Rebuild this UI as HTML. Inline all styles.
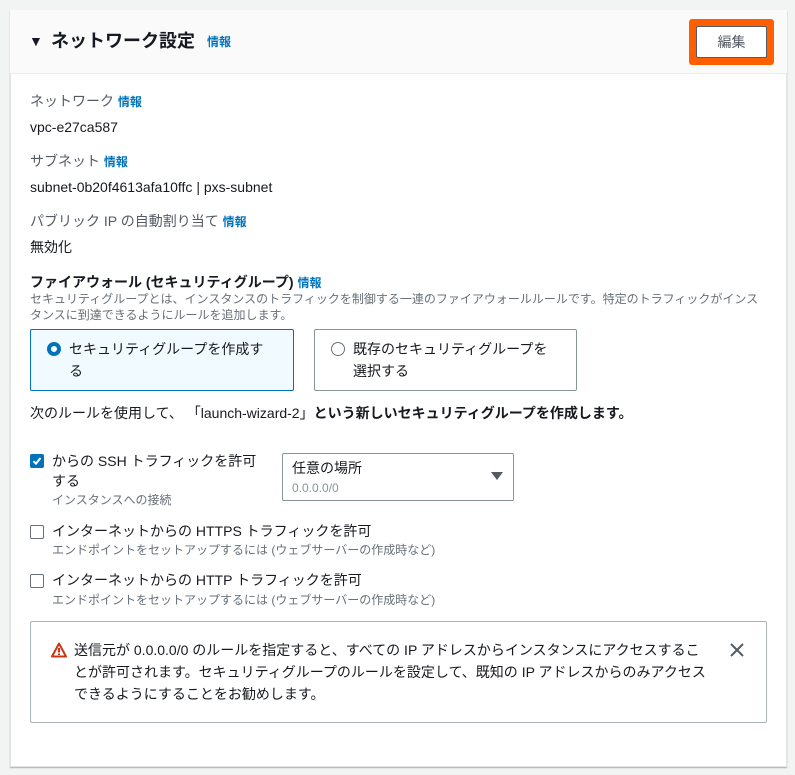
<!DOCTYPE html>
<html><head><meta charset="utf-8"><style>
*{margin:0;padding:0;box-sizing:border-box}
body{width:795px;height:775px;background:#f2f3f3;font-family:"Liberation Sans","Noto Sans CJK JP",sans-serif;color:#16191f;position:relative;overflow:hidden;font-size:14px}
.a{position:absolute;white-space:nowrap;line-height:1}
.panel{position:absolute;left:10px;top:10px;width:777px;height:757px;background:#fff;border:1px solid #e3e5e5;box-shadow:0 1px 1px rgba(0,28,36,.3)}
.hdr{position:absolute;left:10px;top:10px;width:777px;height:64px;background:#fafafa;border-bottom:1px solid #eaeded}
.info{color:#0073bb;font-weight:bold;font-size:12px}
.lbl{color:#545b64}
.sub{color:#687078;font-size:12px}
.box{position:absolute;border:1px solid #879596;border-radius:2px}
.cb{position:absolute;width:14px;height:14px;border:1px solid #687078;border-radius:2px;background:#fff}
</style></head><body>
<div class="panel"></div>
<div class="hdr"></div>
<div class="a" style="left:29px;top:34px;font-size:14px">▼</div>
<div class="a" style="left:51px;top:32px;font-size:18px;font-weight:bold">ネットワーク設定</div>
<div class="a info" style="left:207px;top:36px">情報</div>
<div style="position:absolute;left:689px;top:19px;width:85px;height:46px;background:#ff5f00;border-radius:3px"></div>
<div style="position:absolute;left:696px;top:26px;width:71px;height:32px;background:#fff;border:1px solid #545b64;border-radius:2px;text-align:center;line-height:30px;color:#545b64;font-size:14px">編集</div>

<div class="a lbl" style="left:30px;top:94px">ネットワーク <span class="info">情報</span></div>
<div class="a" style="left:30px;top:120px">vpc-e27ca587</div>
<div class="a lbl" style="left:30px;top:154px">サブネット <span class="info">情報</span></div>
<div class="a" style="left:30px;top:180px">subnet-0b20f4613afa10ffc | pxs-subnet</div>
<div class="a lbl" style="left:30px;top:214px">パブリック IP の自動割り当て <span class="info">情報</span></div>
<div class="a" style="left:30px;top:240px">無効化</div>

<div class="a" style="left:30px;top:275px;font-weight:bold">ファイアウォール (セキュリティグループ) <span class="info">情報</span></div>
<div class="a sub" style="left:30px;top:293px">セキュリティグループとは、インスタンスのトラフィックを制御する一連のファイアウォールルールです。特定のトラフィックがインス</div>
<div class="a sub" style="left:30px;top:309px">タンスに到達できるようにルールを追加します。</div>

<div class="box" style="left:30px;top:329px;width:264px;height:62px;background:#f1faff;border-color:#0073bb"></div>
<div style="position:absolute;left:47px;top:342px;width:14px;height:14px;border-radius:50%;border:4px solid #0073bb;background:#fff"></div>
<div class="a" style="left:69px;top:342px">セキュリティグループを作成す</div>
<div class="a" style="left:69px;top:364px">る</div>
<div class="box" style="left:314px;top:329px;width:263px;height:62px"></div>
<div style="position:absolute;left:331px;top:342px;width:14px;height:14px;border-radius:50%;border:1px solid #687078"></div>
<div class="a" style="left:353px;top:342px">既存のセキュリティグループを</div>
<div class="a" style="left:353px;top:364px">選択する</div>

<div class="a" style="left:30px;top:406px">次のルールを使用して、 「launch-wizard-2」<b>という新しいセキュリティグループを作成します。</b></div>

<div class="cb" style="left:30px;top:454px;background:#0073bb;border-color:#0073bb"><svg width="12" height="12" viewBox="0 0 12 12" style="position:absolute;left:0;top:0"><path d="M2.5 6.2 L5 8.6 L9.5 3" stroke="#fff" stroke-width="2" fill="none"/></svg></div>
<div class="a" style="left:52px;top:454px">からの SSH トラフィックを許可</div>
<div class="a" style="left:52px;top:474px">する</div>
<div class="a sub" style="left:52px;top:494px">インスタンスへの接続</div>
<div class="box" style="left:282px;top:453px;width:232px;height:48px"></div>
<div class="a" style="left:292px;top:461px">任意の場所</div>
<div class="a sub" style="left:292px;top:482px;color:#879596">0.0.0.0/0</div>
<svg style="position:absolute;left:491px;top:472px" width="12" height="8"><path d="M0 0H12L6 8Z" fill="#545b64"/></svg>

<div class="cb" style="left:30px;top:525px"></div>
<div class="a" style="left:52px;top:524px">インターネットからの HTTPS トラフィックを許可</div>
<div class="a sub" style="left:52px;top:544px">エンドポイントをセットアップするには (ウェブサーバーの作成時など)</div>
<div class="cb" style="left:30px;top:574px"></div>
<div class="a" style="left:52px;top:573px">インターネットからの HTTP トラフィックを許可</div>
<div class="a sub" style="left:52px;top:594px">エンドポイントをセットアップするには (ウェブサーバーの作成時など)</div>

<div class="box" style="left:30px;top:621px;width:737px;height:102px;border-color:#aab7b8"></div>
<svg style="position:absolute;left:51px;top:642px" width="16" height="16" viewBox="0 0 16 16"><path d="M8 1.5L15 14.5H1Z" fill="none" stroke="#d13212" stroke-width="2" stroke-linejoin="round"/><path d="M8 6v4.5M8 11.5v1.5" stroke="#d13212" stroke-width="2"/></svg>
<div class="a" style="left:74px;top:643px">送信元が 0.0.0.0/0 のルールを指定すると、すべての IP アドレスからインスタンスにアクセスするこ</div>
<div class="a" style="left:74px;top:665px">とが許可されます。セキュリティグループのルールを設定して、既知の IP アドレスからのみアクセス</div>
<div class="a" style="left:74px;top:687px">できるようにすることをお勧めします。</div>
<svg style="position:absolute;left:730px;top:643px" width="14" height="14"><path d="M1 1L13 13M13 1L1 13" stroke="#545b64" stroke-width="2"/></svg>
</body></html>
